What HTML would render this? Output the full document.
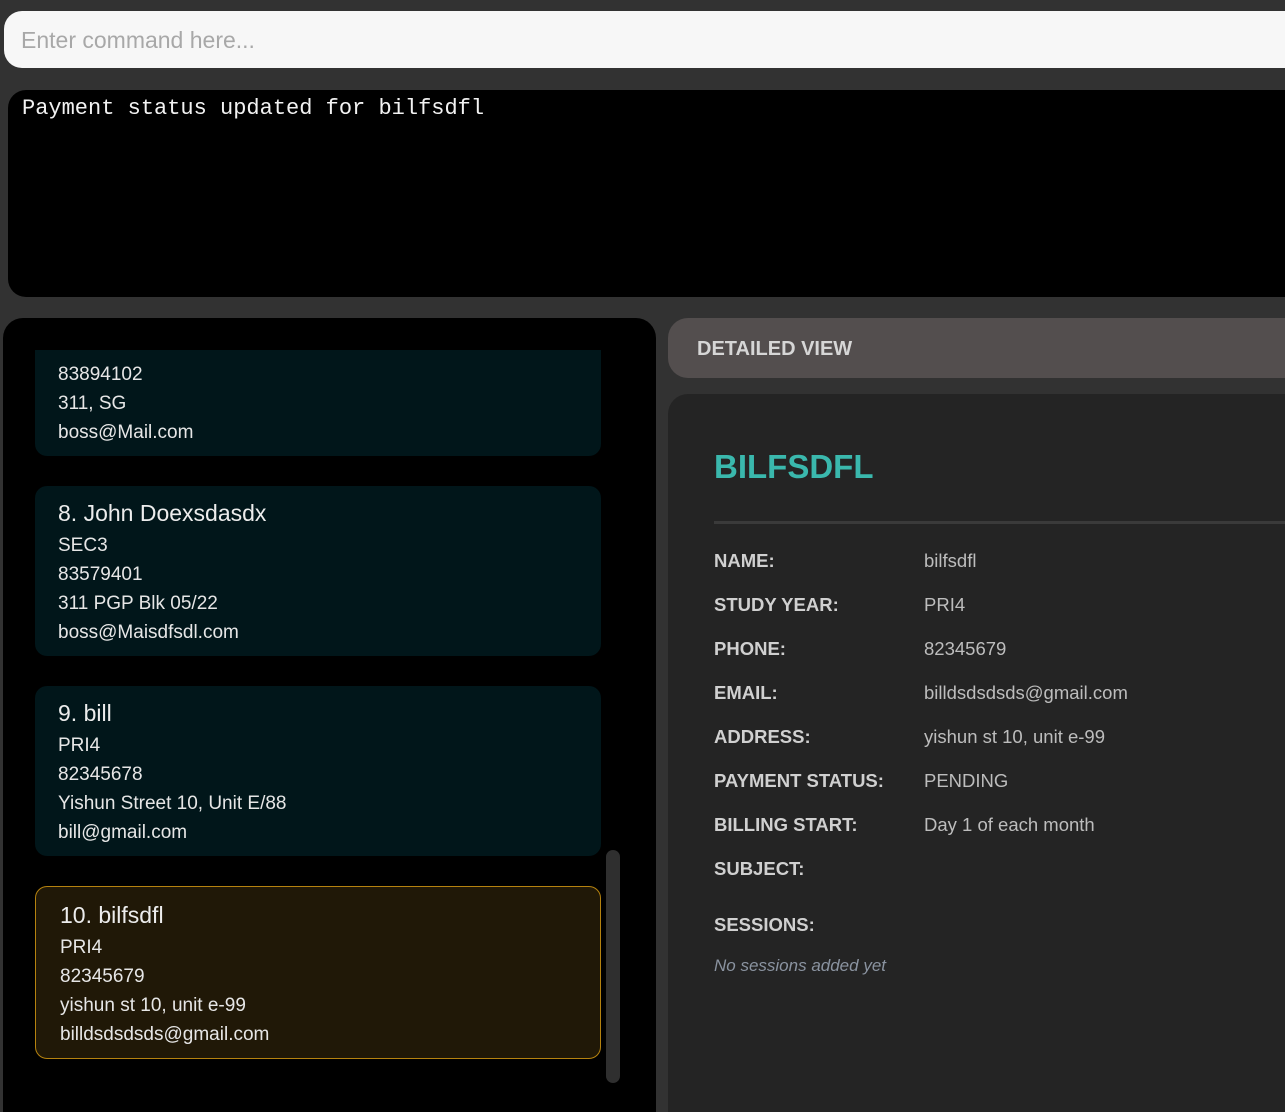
<!DOCTYPE html>
<html style="width:1285px;height:1112px;overflow:hidden"><head><meta charset="utf-8"><style>
*{margin:0;padding:0;box-sizing:border-box}
body{width:1285px;height:1112px;background:#323232;position:relative;overflow:hidden;font-family:"Liberation Sans",sans-serif}
.a{position:absolute}
.t{position:absolute;white-space:nowrap;line-height:24px}
.card{position:absolute;left:35px;width:566px;background:#01161a;border-radius:12px}
.cl{font-size:19px;color:#e6e6e6}
.ct{font-size:23px;color:#ececec}
.lb{font-size:18.5px;font-weight:bold;color:#d0d0d0;left:714px}
.vl{font-size:18.5px;color:#bdbdbd;left:924px}
</style></head><body>
<div class="a" style="left:4px;top:11px;width:1300px;height:57px;background:#f7f7f7;border-radius:18px"></div>
<div class="t" style="left:21px;top:28px;font-size:23px;color:#a8a8a8">Enter command here...</div>
<div class="a" style="left:8px;top:90px;width:1300px;height:207px;background:#000;border-radius:18px"></div>
<div class="t" style="left:22px;top:97px;font-family:'Liberation Mono',monospace;font-size:22px;color:#f2f2f2">Payment status updated for bilfsdfl</div>

<div class="a" style="left:3px;top:318px;width:653px;height:794px;background:#000;border-radius:20px 20px 0 0"></div>
<div class="a" style="left:3px;top:350px;width:653px;height:700px;overflow:hidden">
 <div class="card" style="left:32px;top:-40px;height:146px"></div>
 <div class="t cl" style="left:55px;top:-17px">SEC3</div>
 <div class="t cl" style="left:55px;top:13px">83894102</div>
 <div class="t cl" style="left:55px;top:42px">311, SG</div>
 <div class="t cl" style="left:55px;top:71px">boss@Mail.com</div>
</div>
<div class="card" style="top:486px;height:170px"></div>
<div class="t ct" style="left:58px;top:501px">8. John Doexsdasdx</div>
<div class="t cl" style="left:58px;top:534px">SEC3</div>
<div class="t cl" style="left:58px;top:563px">83579401</div>
<div class="t cl" style="left:58px;top:592px">311 PGP Blk 05/22</div>
<div class="t cl" style="left:58px;top:621px">boss@Maisdfsdl.com</div>

<div class="card" style="top:686px;height:170px"></div>
<div class="t ct" style="left:58px;top:701px">9. bill</div>
<div class="t cl" style="left:58px;top:734px">PRI4</div>
<div class="t cl" style="left:58px;top:763px">82345678</div>
<div class="t cl" style="left:58px;top:792px">Yishun Street 10, Unit E/88</div>
<div class="t cl" style="left:58px;top:821px">bill@gmail.com</div>

<div class="card" style="top:886px;height:173px;background:#201807;border:1.5px solid #b5820f"></div>
<div class="t ct" style="left:60px;top:903px">10. bilfsdfl</div>
<div class="t cl" style="left:60px;top:936px">PRI4</div>
<div class="t cl" style="left:60px;top:965px">82345679</div>
<div class="t cl" style="left:60px;top:994px">yishun st 10, unit e-99</div>
<div class="t cl" style="left:60px;top:1023px">billdsdsdsds@gmail.com</div>
<div class="a" style="left:606px;top:850px;width:14px;height:233px;background:#2f2f2f;border-radius:7px"></div>

<div class="a" style="left:668px;top:318px;width:640px;height:60px;background:#534e4e;border-radius:20px"></div>
<div class="t" style="left:697px;top:337px;font-size:20px;font-weight:bold;color:#d6d6d6">DETAILED VIEW</div>
<div class="a" style="left:668px;top:394px;width:640px;height:718px;background:#242424;border-radius:20px 0 0 0"></div>
<div class="t" style="left:714px;top:447px;line-height:40px;font-size:33px;font-weight:bold;color:#3ab8ad">BILFSDFL</div>
<div class="a" style="left:714px;top:521px;width:580px;height:3px;background:#3a3a3a"></div>
<div class="t lb" style="top:549px">NAME:</div><div class="t vl" style="top:549px">bilfsdfl</div>
<div class="t lb" style="top:593px">STUDY YEAR:</div><div class="t vl" style="top:593px">PRI4</div>
<div class="t lb" style="top:637px">PHONE:</div><div class="t vl" style="top:637px">82345679</div>
<div class="t lb" style="top:681px">EMAIL:</div><div class="t vl" style="top:681px">billdsdsdsds@gmail.com</div>
<div class="t lb" style="top:725px">ADDRESS:</div><div class="t vl" style="top:725px">yishun st 10, unit e-99</div>
<div class="t lb" style="top:769px">PAYMENT STATUS:</div><div class="t vl" style="top:769px">PENDING</div>
<div class="t lb" style="top:813px">BILLING START:</div><div class="t vl" style="top:813px">Day 1 of each month</div>
<div class="t lb" style="top:857px">SUBJECT:</div>
<div class="t lb" style="top:913px">SESSIONS:</div>
<div class="t" style="left:714px;top:954px;font-size:17px;font-style:italic;color:#8a93a0">No sessions added yet</div>
</body></html>
